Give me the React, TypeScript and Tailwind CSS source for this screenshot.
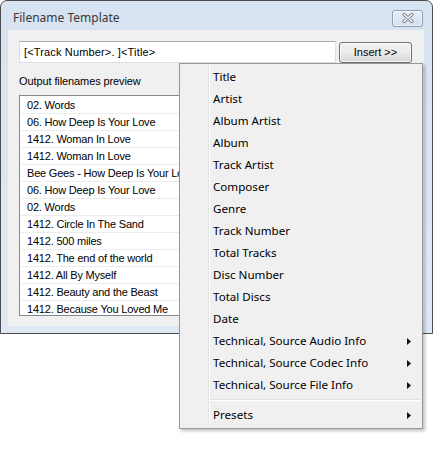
const rows = [
  '02. Words',
  '06. How Deep Is Your Love',
  '1412. Woman In Love',
  '1412. Woman In Love',
  'Bee Gees - How Deep Is Your Love',
  '06. How Deep Is Your Love',
  '02. Words',
  '1412. Circle In The Sand',
  '1412. 500 miles',
  '1412. The end of the world',
  '1412. All By Myself',
  '1412. Beauty and the Beast',
  '1412. Because You Loved Me',
];

const menuItems: { label: string; sub?: boolean }[] = [
  { label: 'Title' },
  { label: 'Artist' },
  { label: 'Album Artist' },
  { label: 'Album' },
  { label: 'Track Artist' },
  { label: 'Composer' },
  { label: 'Genre' },
  { label: 'Track Number' },
  { label: 'Total Tracks' },
  { label: 'Disc Number' },
  { label: 'Total Discs' },
  { label: 'Date' },
  { label: 'Technical, Source Audio Info', sub: true },
  { label: 'Technical, Source Codec Info', sub: true },
  { label: 'Technical, Source File Info', sub: true },
];

const tahoma = "font-['Liberation_Sans',Arial,sans-serif]";
const segoe = "font-['Noto_Sans',sans-serif]";

function Arrow() {
  return (
    <svg width="4" height="7" viewBox="0 0 4 7" className="shrink-0">
      <path d="M0 0 L4 3.5 L0 7 Z" fill="#1e0d12" />
    </svg>
  );
}

function MenuRow({ label, sub }: { label: string; sub?: boolean }) {
  return (
    <div className="flex h-[22px]">
      <div className="w-[27px] shrink-0 border-r border-[#e2e3e3]" />
      <div className="flex flex-1 items-center justify-between border-l border-white pl-[3px] pr-[9px]">
        <span className="text-[11.6px] text-black">{label}</span>
        {sub && <Arrow />}
      </div>
    </div>
  );
}

function InsertMenu() {
  return (
    <div className={`absolute left-[179px] top-[63px] w-[244px] border border-[#979797] bg-[#f0f0f0] p-[2px] shadow-[2px_2px_3px_rgba(0,0,0,0.25)] ${segoe}`}>
      {menuItems.map((m) => (
        <MenuRow key={m.label} label={m.label} sub={m.sub} />
      ))}
      <div className="flex h-[8px]">
        <div className="w-[27px] shrink-0 border-r border-[#e2e3e3]" />
        <div className="flex flex-1 flex-col justify-center border-l border-white">
          <div className="h-px bg-[#e0e0e0]" />
          <div className="h-px bg-white" />
        </div>
      </div>
      <MenuRow label="Presets" sub />
    </div>
  );
}

function CloseButton() {
  return (
    <div className="flex h-[17px] w-[31px] items-center justify-center rounded-[3px] border border-[#8d9db2] bg-gradient-to-b from-[#e9eff7] to-[#d4deeb] shadow-[inset_0_0_0_1px_rgba(255,255,255,0.6)]">
      <svg width="12" height="10" viewBox="0 0 12 10">
        <path d="M2 1.5 L10 8.5 M10 1.5 L2 8.5" stroke="#6f7b8c" strokeWidth="3.2" strokeLinecap="round" />
        <path d="M2 1.5 L10 8.5 M10 1.5 L2 8.5" stroke="#ffffff" strokeWidth="1.6" strokeLinecap="round" />
      </svg>
    </div>
  );
}

export default function App() {
  return (
    <div className="relative h-[467px] w-[434px] overflow-hidden bg-white">
      <div className="flex h-[334px] w-[433px] flex-col rounded-t-[7px] border border-[#4d4d4d] bg-gradient-to-b from-[#d8e3f1] to-[#dfe9f6]">
        <div className="flex h-[29px] shrink-0 items-center justify-between pl-[12px] pr-[9px] pt-[5px]">
          <span className={`text-[12px] text-[#383838] ${segoe}`}>Filename Template</span>
          <CloseButton />
        </div>

        <div className={`mb-[7px] ml-[7px] mr-[8px] flex flex-1 flex-col bg-[#f0f0f0] px-[11px] pt-[11px] ${tahoma} text-[11px] text-black`}>
          <div className="flex items-start gap-[3px]">
            <div className="flex h-[22px] w-[317px] items-center border border-[#dbdfe6] border-t-[#abadb3] bg-white pl-[4px] tracking-[0.15px]">
              [&lt;Track Number&gt;. ]&lt;Title&gt;
            </div>
            <button className="mt-[1px] h-[21px] w-[73px] rounded-[3px] border border-[#707070] bg-gradient-to-b from-[#f2f2f2] via-[#ebebeb] to-[#d6d6d6] text-[11px] text-black shadow-[inset_0_0_0_1px_rgba(255,255,255,0.7)]">
              Insert &gt;&gt;
            </button>
          </div>

          <div className="mt-[12px] leading-[13px] tracking-[-0.1px]">Output filenames preview</div>

          <div className="mt-[7px] h-[221px] w-[393px] overflow-hidden border border-[#828790] bg-white p-px tracking-[-0.2px]">
            {rows.map((r, i) => (
              <div key={i} className="flex h-[17px] items-center border-b border-[#ececec] pl-[6px] whitespace-nowrap">
                {r}
              </div>
            ))}
          </div>
        </div>
      </div>

      <InsertMenu />
    </div>
  );
}
